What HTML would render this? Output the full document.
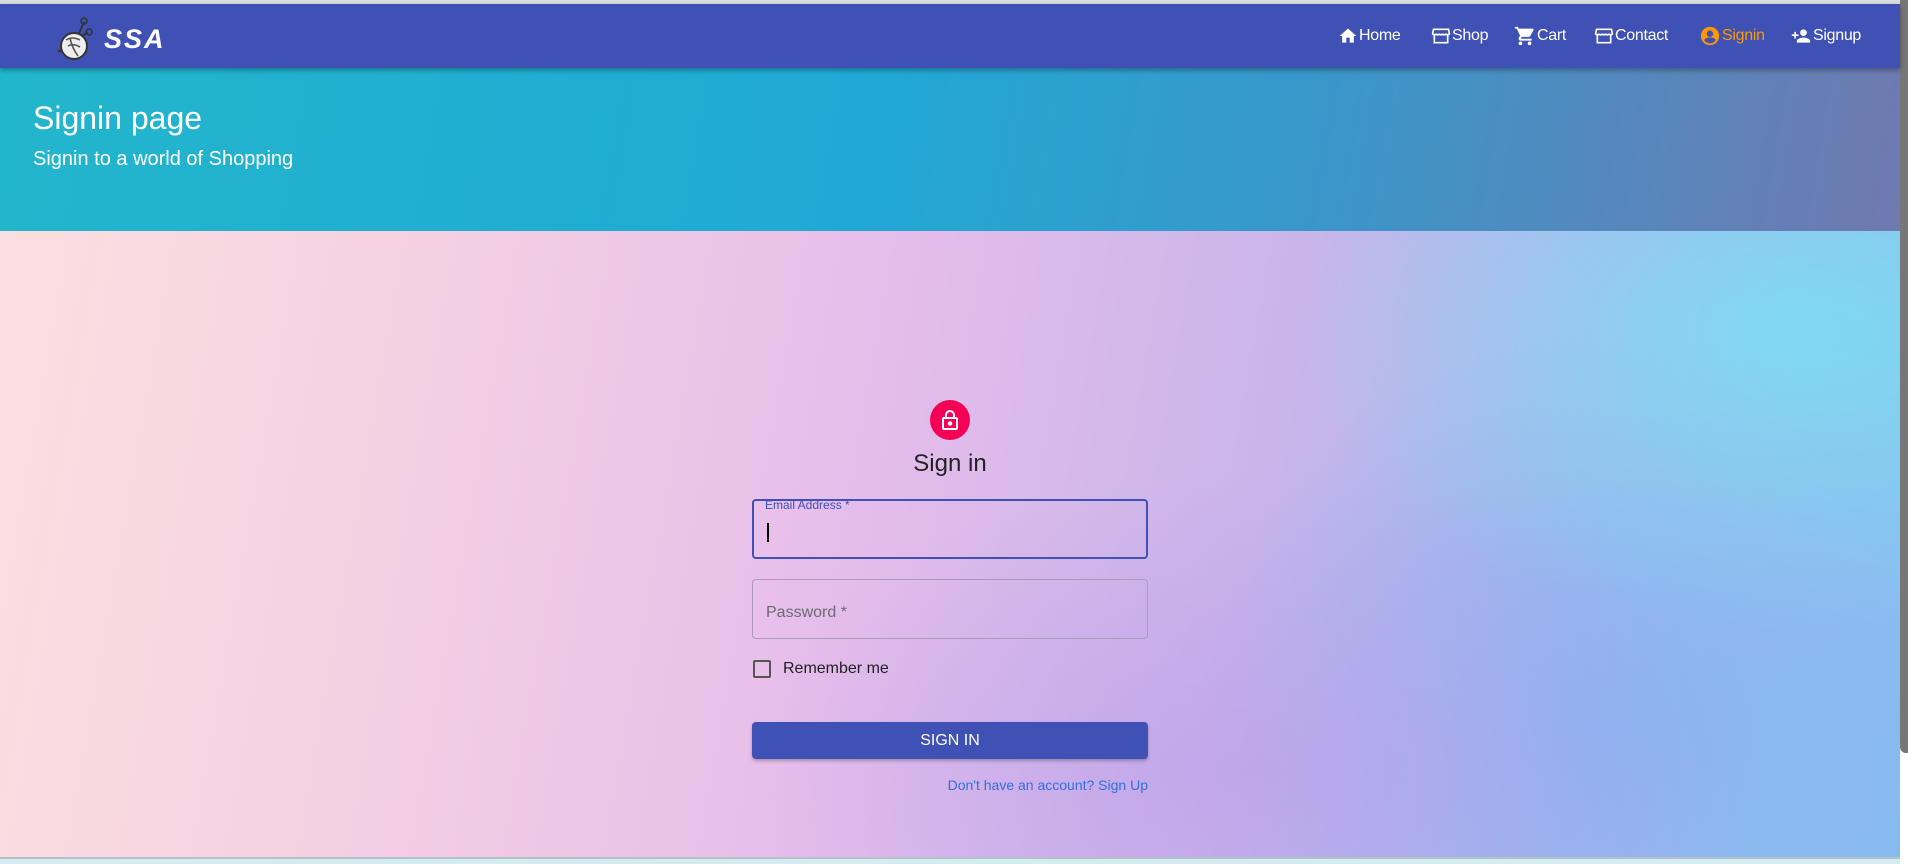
<!DOCTYPE html>
<html><head><meta charset="utf-8"><style>
*{margin:0;padding:0;box-sizing:border-box}
body{width:1908px;height:864px;overflow:hidden;position:relative;font-family:"Liberation Sans",sans-serif;background:#d4ecf0}
.top{position:absolute;left:0;top:0;width:1900px;height:4px;background:#dcdde0}
.nav{position:absolute;left:0;top:4px;width:1900px;height:64px;background:#3f51b5;box-shadow:0 2px 5px rgba(0,0,0,.35);z-index:3}
.hdr{position:absolute;left:0;top:68px;width:1900px;height:163px;background:linear-gradient(100deg,#22b6cc 0%,#20a9d5 45%,#3b96c9 70%,#7079b0 100%)}
.main{position:absolute;left:0;top:231px;width:1900px;height:626px;
background:
radial-gradient(ellipse 500px 300px at 1250px 540px,rgba(190,160,235,.7),transparent),
radial-gradient(ellipse 500px 300px at 1800px 100px,rgba(120,225,240,.8),transparent),
radial-gradient(ellipse 400px 400px at 1600px 500px,rgba(130,180,240,.9),transparent),
linear-gradient(100deg,#fbe0e0 0%,#f4cde3 25%,#e5bdeb 45%,#c9b5ea 65%,#a5b8ef 85%,#88bdf0 100%)}
.bottom{position:absolute;left:0;top:857px;width:1900px;height:2px;background:#b0c4c8}
.sb{position:absolute;left:1900px;top:0;width:8px;height:864px;background:#fff}
.sb i{position:absolute;left:0;top:0;width:8px;height:753px;background:#777;border-radius:0 0 0 6px}
.nv{position:absolute;top:0;height:64px;display:flex;align-items:center;color:#fff;font-size:16px;gap:1px;letter-spacing:-.3px}
.ssa{position:absolute;left:104px;top:20px;color:#fff;font-size:27px;font-weight:bold;font-style:italic;letter-spacing:2px}
h1{position:absolute;left:33px;color:#fff;font-size:32px;font-weight:normal}
h2{position:absolute;left:33px;color:#fff;font-size:20px;font-weight:normal}
.lock{position:absolute;left:930px;top:400px;width:40px;height:40px;border-radius:50%;background:#f50057}
.title{position:absolute;left:850px;top:450px;width:200px;text-align:center;font-size:24px;color:#222}
.f{position:absolute;left:752px;width:396px;height:60px;border-radius:4px}
.btn{position:absolute;left:752px;top:722px;width:396px;height:37px;background:#3f51b5;border-radius:4px;color:#fff;text-align:center;line-height:37px;font-size:16px;box-shadow:0 2px 3px rgba(0,0,0,.25)}
</style></head><body>
<div class="top"></div>
<div class="nav">
<svg style="position:absolute;left:54px;top:12px" width="40" height="50" viewBox="0 0 40 50"><line x1="14" y1="42" x2="30" y2="6" stroke="#333" stroke-width="2"/><line x1="4" y1="36" x2="34" y2="16" stroke="#333" stroke-width="2"/><circle cx="30" cy="5" r="3" fill="none" stroke="#333" stroke-width="1.5"/><circle cx="35" cy="16" r="3" fill="none" stroke="#333" stroke-width="1.5"/><circle cx="20" cy="30" r="13" fill="#eee" stroke="#333" stroke-width="2"/><path d="M12 24q6-4 14 0M14 30q5-3 12 1M16 22q2 10 8 18" fill="none" stroke="#555" stroke-width="1.6"/></svg>
<div class="ssa">SSA</div>
<div class="nv" style="left:1338px"><svg width="20" height="20" viewBox="0 0 24 24" fill="#fff"><path d="M10 20v-6h4v6h5v-8h3L12 3 2 12h3v8z"/></svg>Home</div>
<div class="nv" style="left:1431px"><svg width="20" height="20" viewBox="0 0 24 24" fill="none" stroke="#fff" stroke-width="2"><path d="M3 4h18l1 5c0 2-4 2-4 0 0 2-4 2-4 0 0 2-4 2-4 0 0 2-4 2-4 0 0 2-4 2-4 0zM4 11v9h16v-9"/></svg>Shop</div>
<div class="nv" style="left:1514px"><svg width="22" height="22" viewBox="0 0 24 24" fill="#fff"><path d="M7 18a2 2 0 100 4 2 2 0 000-4zM1 2v2h2l3.6 7.6-1.4 2.4c-.6 1.3.4 3 2 3h12v-2H7.4l1.1-2h7.5c.7 0 1.4-.4 1.7-1l3.6-6.5c.4-.7-.1-1.5-.9-1.5H5.2l-.9-2zm16 16a2 2 0 100 4 2 2 0 000-4z"/></svg>Cart</div>
<div class="nv" style="left:1594px"><svg width="20" height="20" viewBox="0 0 24 24" fill="none" stroke="#fff" stroke-width="2"><path d="M3 4h18l1 5c0 2-4 2-4 0 0 2-4 2-4 0 0 2-4 2-4 0 0 2-4 2-4 0 0 2-4 2-4 0zM4 11v9h16v-9"/></svg>Contact</div>
<div class="nv" style="left:1699px;color:#ff9800"><svg width="22" height="22" viewBox="0 0 24 24" fill="#ff9800"><path d="M12 2a10 10 0 100 20 10 10 0 000-20zm0 4a3.5 3.5 0 110 7 3.5 3.5 0 010-7zm0 14c-2.6 0-4.9-1.3-6.3-3.3 0-2.1 4.2-3.2 6.3-3.2s6.3 1.1 6.3 3.2A7.6 7.6 0 0112 20z"/></svg>Signin</div>
<div class="nv" style="left:1790px"><svg width="22" height="20" viewBox="0 0 24 24" fill="#fff"><path d="M15 12a4 4 0 100-8 4 4 0 000 8zm-9-2V7H4v3H1v2h3v3h2v-3h3v-2zm9 4c-2.7 0-8 1.3-8 4v2h16v-2c0-2.7-5.3-4-8-4z"/></svg>Signup</div>
</div>
<div class="hdr"><h1 style="top:32px">Signin page</h1><h2 style="top:80px">Signin to a world of Shopping</h2></div>
<div class="main"></div>
<div class="lock"><svg style="position:absolute;left:10px;top:9px" width="20" height="22" viewBox="0 0 20 22" fill="none" stroke="#fff" stroke-width="2"><rect x="3" y="9" width="14" height="11" rx="1"/><path d="M6 9V6a4 4 0 018 0v3"/><circle cx="10" cy="14.5" r="1.3" fill="#fff"/></svg></div>
<div class="title">Sign in</div>
<div class="f" style="top:499px;border:2px solid #3f51b5"><span style="position:absolute;left:11px;top:-3px;font-size:12px;color:#3f51b5">Email Address *</span><span style="position:absolute;left:13px;top:22px;width:2px;height:19px;background:#000"></span></div>
<div class="f" style="top:579px;border:1px solid #a99cb8"><span style="position:absolute;left:13px;top:24px;font-size:16px;color:#6a6a78">Password *</span></div>
<div style="position:absolute;left:753px;top:660px;width:18px;height:18px;border:2px solid #555;border-radius:2px"></div>
<div style="position:absolute;left:783px;top:660px;font-size:16px;color:#222">Remember me</div>
<div class="btn">SIGN IN</div>
<div style="position:absolute;left:848px;top:777px;width:300px;text-align:right;font-size:14px;color:#2f6fe0">Don't have an account? Sign Up</div>
<div class="bottom"></div>
<div class="sb"><i></i></div>
</body></html>
